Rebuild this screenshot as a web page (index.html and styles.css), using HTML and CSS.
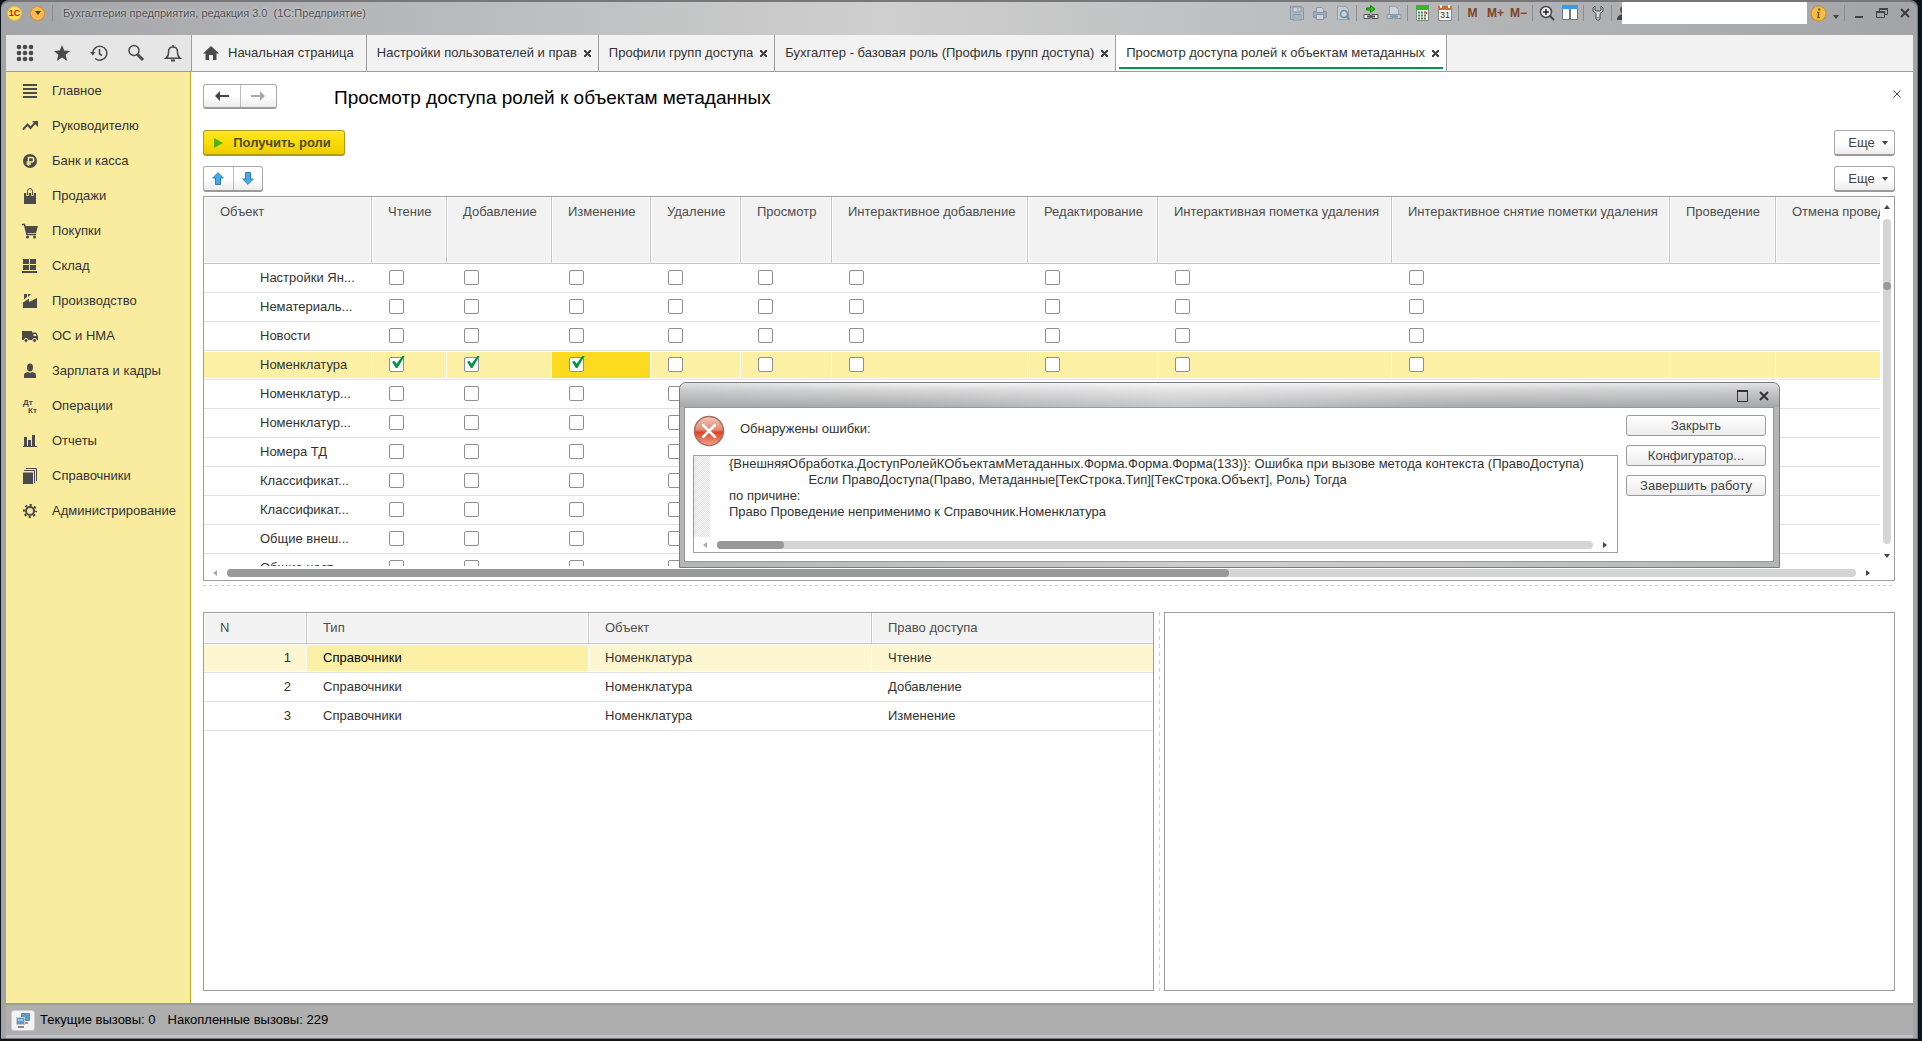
FILE: index.html
```html
<!DOCTYPE html>
<html lang="ru">
<head>
<meta charset="utf-8">
<title>Бухгалтерия предприятия, редакция 3.0</title>
<link rel="stylesheet" href="styles.css">
</head>
<body>
<div class="window">
  <header class="titlebar">
    <span class="logo"><b>1С</b></span>
    <button class="round-menu" aria-label="Главное меню"><i class="caret"></i></button>
    <i class="sep"></i>
    <span class="app-title">Бухгалтерия предприятия, редакция 3.0&nbsp; (1С:Предприятие)</span>
    <div class="tools">
      <button class="tool off" aria-label="Сохранить"><svg width="16" height="16" viewBox="0 0 16 16"><path d="M1.500 1.500h12l1 1v12h-13z" fill="#b3bcc4" stroke="#8296a6"/><path d="M4 2h8v5H4zM4 9.500h8V15H4z" fill="#ccd2d7" stroke="#8296a6"/><path d="M9 3v3M5 11h6M5 13h6" stroke="#8296a6"/></svg></button>
      <button class="tool off" aria-label="Печать"><svg width="16" height="16" viewBox="0 0 16 16"><path d="M1.500 6.500h13v6h-13z" fill="#9fadb8" stroke="#8296a6"/><path d="M4.500 2.500h5l2 2v3h-7zM4.500 9.500h7v5h-7z" fill="#ccd2d7" stroke="#8296a6"/></svg></button>
      <button class="tool off" aria-label="Просмотр"><svg width="16" height="16" viewBox="0 0 16 16"><path d="M2.500 1.500h8l3 3v10h-11z" fill="#c6cdd3" stroke="#8fa0ae"/><circle cx="9" cy="9" r="3.500" fill="#c6d3dc" stroke="#6f8ba1" stroke-width="1.500"/><path d="M11.500 11.500l3 3" stroke="#6f8ba1" stroke-width="2"/></svg></button>
      <i class="sep"></i>
      <button class="tool" aria-label="Получить ссылку"><svg width="16" height="16" viewBox="0 0 16 16"><path d="M3.500 3h4V.500l4.500 3.500-4.500 3.500V5h-4z" fill="#2bc81e" stroke="#14750d"/><path d="M1 9.500h6v4H1zM9 9.500h6v4H9z" fill="#eee" stroke="#555"/><path d="M4 11.500h8" stroke="#555" stroke-width="2"/></svg></button>
      <button class="tool off" aria-label="Перейти по ссылке"><svg width="16" height="16" viewBox="0 0 16 16"><path d="M3.500 1.500h6l3 3v5h-9z" fill="#ccd2d7" stroke="#8fa0ae"/><path d="M1 9.500h6v4H1zM9 9.500h6v4H9z" fill="#c3cad0" stroke="#8296a6"/><path d="M4 11.500h8" stroke="#8296a6" stroke-width="2"/></svg></button>
      <i class="sep"></i>
      <button class="tool" aria-label="Калькулятор"><svg width="16" height="16" viewBox="0 0 16 16"><path d="M2.500.500h12v15h-12z" fill="#f2f5f0" stroke="#7d8a7d"/><path d="M2 0h13v5H2z" fill="#39b339"/><path d="M4 7.500h8M4 10.500h8M4 13.500h8" stroke="#5f7d5f" stroke-width="2" stroke-dasharray="2 1"/><path d="M12 7h1v2h-1z" fill="#e33"/></svg></button>
      <button class="tool" aria-label="Календарь"><svg width="16" height="16" viewBox="0 0 16 16"><path d="M1.500 2.500h13v13h-13z" fill="#fafafa" stroke="#888"/><path d="M1 1h14v4H1z" fill="#c66f3c"/><path d="M4 0v3M12 0v3" stroke="#eee" stroke-width="2"/><text x="8" y="13" text-anchor="middle" class="cal-day">31</text></svg></button>
      <i class="sep"></i>
      <button class="tool mem">M</button>
      <button class="tool mem">M+</button>
      <button class="tool mem">M−</button>
      <i class="sep"></i>
      <button class="tool" aria-label="Масштаб"><svg width="16" height="16" viewBox="0 0 16 16"><circle cx="7" cy="7" r="5.500" fill="#eee" stroke="#444" stroke-width="1.500"/><path d="M7 4v6M4 7h6" stroke="#222" stroke-width="1.500"/><path d="M11 11l4 4" stroke="#444" stroke-width="2"/></svg></button>
      <button class="tool" aria-label="Панели"><svg width="16" height="16" viewBox="0 0 16 16"><path d="M.500 1.500h15v13H.500z" fill="#fff" stroke="#777"/><path d="M0 0h16v4H0z" fill="#3c9be8"/><path d="M8 4v11" stroke="#777" stroke-width="2"/></svg></button>
      <i class="sep"></i>
      <button class="tool" aria-label="Настройка"><svg width="16" height="16" viewBox="0 0 16 16"><path d="M5 1L3 3v3l3 2.500V14l2 1.500 2-1.500V8.500L13 6V3l-2-2v4L9.500 6h-3L5 5z" fill="#ddd" stroke="#444"/><path d="M8 12v1.500" stroke="#333"/></svg></button>
      <i class="sep"></i>
      <span class="user-clip"><svg width="16" height="16" viewBox="0 0 16 16"><circle cx="7" cy="5" r="4" fill="#555"/><path d="M0 15q0-6 7-6t7 6z" fill="#444"/></svg></span>
      <input class="title-input" type="text" aria-label="Пользователь">
      <button class="tool" aria-label="О программе"><svg width="17" height="17" viewBox="0 0 17 17"><circle cx="8.500" cy="8.500" r="7.500" fill="#f5bd45" stroke="#c98d20"/><circle cx="9.200" cy="4.500" r="1.200" fill="#7c5a1e"/><path d="M7 7.500h1.800L8 12.500h1.800" fill="none" stroke="#7c5a1e" stroke-width="1.500"/></svg></button>
      <button class="tool narrow" aria-label="Ещё"><i class="caret low"></i></button>
      <i class="sep"></i>
      <button class="tool" aria-label="Свернуть"><svg width="12" height="12" viewBox="0 0 12 12"><path d="M2 10h8" stroke="#444" stroke-width="2"/></svg></button>
      <button class="tool" aria-label="Восстановить"><svg width="12" height="12" viewBox="0 0 12 12"><path d="M3.500 4V1.500h8v6H9" fill="none" stroke="#444"/><path d="M3 2h9M0 5h9" stroke="#444" stroke-width="2"/><path d="M.500 4.500h8v6h-8z" fill="none" stroke="#444"/></svg></button>
      <button class="tool" aria-label="Закрыть"><svg width="12" height="12" viewBox="0 0 12 12"><path d="M2 2l8 8M10 2l-8 8" stroke="#3c3c3c" stroke-width="2"/></svg></button>
    </div>
  </header>

  <nav class="tabs">
    <div class="quick">
      <button aria-label="Меню функций"><svg width="18" height="18" viewBox="0 0 18 18" fill="#4a4a4a"><circle cx="3" cy="3" r="2.300"/><circle cx="9" cy="3" r="2.300"/><circle cx="15" cy="3" r="2.300"/><circle cx="3" cy="9" r="2.300"/><circle cx="9" cy="9" r="2.300"/><circle cx="15" cy="9" r="2.300"/><circle cx="3" cy="15" r="2.300"/><circle cx="9" cy="15" r="2.300"/><circle cx="15" cy="15" r="2.300"/></svg></button>
      <button aria-label="Избранное"><svg width="18" height="18" viewBox="0 0 18 18" fill="#4a4a4a"><path d="M9 1l2.200 5.500 6 .400-4.600 3.800L14.200 17 9 13.500 3.800 17l1.600-6.300L.800 6.900l6-.400z"/></svg></button>
      <button aria-label="История"><svg width="18" height="18" viewBox="0 0 18 18" fill="none" stroke="#4a4a4a" stroke-width="1.500"><path d="M2.800 9.500a7 7 0 1 1 2.400 5"/><path d="M9.500 5v5l2.500 1.500"/><path d="M0 8h5.500L2.800 11.500z" fill="#4a4a4a" stroke="none"/></svg></button>
      <button aria-label="Поиск"><svg width="18" height="18" viewBox="0 0 18 18" fill="none" stroke="#4a4a4a"><circle cx="7" cy="6.500" r="5" stroke-width="1.500"/><path d="M10.500 10.500l5.500 5.500" stroke-width="3"/></svg></button>
      <button aria-label="Уведомления"><svg width="18" height="18" viewBox="0 0 18 18" fill="none" stroke="#4a4a4a" stroke-width="1.500"><path d="M9 1v2M2 14.200h14c-2-1.500-2.500-3-2.500-6 0-3-1.700-5.200-4.500-5.200S4.500 5.200 4.500 8.200c0 3-.500 4.500-2.500 6z"/><path d="M7 16.500h4" stroke-width="2"/></svg></button>
    </div>
    <a class="tab home" href="#"><svg width="16" height="14" viewBox="0 0 16 14" fill="#4a4a4a"><path d="M8 0l8 7.500h-2.500V14H10V9H6v5H2.500V7.500H0z"/></svg>Начальная страница</a>
    <a class="tab" href="#">Настройки пользователей и прав<i class="x"></i></a>
    <a class="tab" href="#">Профили групп доступа<i class="x"></i></a>
    <a class="tab" href="#">Бухгалтер - базовая роль (Профиль групп доступа)<i class="x"></i></a>
    <a class="tab active" href="#">Просмотр доступа ролей к объектам метаданных<i class="x"></i></a>
  </nav>

  <div class="body">
    <nav class="side">
      <a href="#"><svg width="16" height="16" viewBox="0 0 16 16"><path d="M1 2h14M1 6h14M1 10h14M1 14h14" stroke="#4a4a4a" stroke-width="2"/></svg>Главное</a>
      <a href="#"><svg width="16" height="16" viewBox="0 0 16 16"><path d="M1 11.500l4.500-5 3 3.500L13 5" fill="none" stroke="#4a4a4a" stroke-width="2"/><path d="M10 3h6v6z" fill="#4a4a4a"/></svg>Руководителю</a>
      <a href="#"><svg width="16" height="16" viewBox="0 0 16 16"><circle cx="8" cy="8" r="7" fill="#4a4a4a"/><path d="M6.500 13V4.500h3a2 2 0 0 1 0 4.500H4.500M4.500 11h4.500" fill="none" stroke="#faec9f" stroke-width="1.500"/></svg>Банк и касса</a>
      <a href="#"><svg width="16" height="16" viewBox="0 0 16 16"><path d="M2 5h12v11H2z" fill="#4a4a4a"/><path d="M5.500 8V3.500q0-2.500 2.500-2.500t2.500 2.500V8" fill="none" stroke="#faec9f" stroke-width="2.500"/><path d="M5.500 7V3.500q0-3 2.500-3t2.500 3V7" fill="none" stroke="#4a4a4a"/></svg>Продажи</a>
      <a href="#"><svg width="16" height="16" viewBox="0 0 16 16"><path d="M3 3h13l-2 7H4.500z" fill="#4a4a4a"/><path d="M0 1.500h2.500l2.500 10h9" fill="none" stroke="#4a4a4a" stroke-width="1.500"/><circle cx="5.500" cy="14" r="1.500" fill="#4a4a4a"/><circle cx="12.500" cy="14" r="1.500" fill="#4a4a4a"/></svg>Покупки</a>
      <a href="#"><svg width="16" height="16" viewBox="0 0 16 16"><path d="M1 1h6v5H1zM8 1h6v5H8zM1 7h6v5H1zM8 7h6v5H8zM0 13h15v2H0z" fill="#4a4a4a"/></svg>Склад</a>
      <a href="#"><svg width="16" height="16" viewBox="0 0 16 16"><path d="M1 9.500l6-4v3.500L15 5v10H1zM2 1h3v3L2 6.500zM6 1h3l-3 3z" fill="#4a4a4a"/></svg>Производство</a>
      <a href="#"><svg width="16" height="16" viewBox="0 0 16 16"><path d="M0 3h10v9H0zM10 4.500h4l2 3.500v4h-6z" fill="#4a4a4a"/><path d="M11.500 6h2l1 2h-3z" fill="#faec9f"/><g fill="#4a4a4a" stroke="#faec9f"><circle cx="4" cy="12.500" r="2"/><circle cx="12.500" cy="12.500" r="2"/></g></svg>ОС и НМА</a>
      <a href="#"><svg width="16" height="16" viewBox="0 0 16 16" fill="#4a4a4a"><ellipse cx="8" cy="4.500" rx="3" ry="4"/><path d="M2 15v-3q0-2.500 4-3l2 1 2-1q4 .500 4 3v3z"/></svg>Зарплата и кадры</a>
      <a href="#"><svg width="16" height="16" viewBox="0 0 16 16" class="dk"><text x="1" y="7">Дт</text><text x="6" y="15">Кт</text></svg>Операции</a>
      <a href="#"><svg width="16" height="16" viewBox="0 0 16 16"><path d="M1 13h14v1H1zM2 4h3v9H2zM6 7h3v6H6zM10 2h3v11h-3z" fill="#4a4a4a"/></svg>Отчеты</a>
      <a href="#"><svg width="16" height="16" viewBox="0 0 16 16"><path d="M1 4.500h10V16H1z" fill="#4a4a4a"/><path d="M2 2.500h10.500V15M4 .500h10.500V13" fill="none" stroke="#4a4a4a"/></svg>Справочники</a>
      <a href="#"><svg width="16" height="16" viewBox="0 0 16 16"><circle cx="8" cy="8" r="4" fill="none" stroke="#4a4a4a" stroke-width="2"/><circle cx="8" cy="8" r="6" fill="none" stroke="#4a4a4a" stroke-width="2" stroke-dasharray="2.300 2.412" stroke-dashoffset="1.150"/></svg>Администрирование</a>
    </nav>

    <main>
      <div class="form-head">
        <div class="pair nav-pair">
          <button aria-label="Назад"><svg width="14" height="12" viewBox="0 0 14 12"><path d="M1 6h13" stroke="#444" stroke-width="2"/><path d="M0 6l5-5v10z" fill="#444"/></svg></button>
          <button aria-label="Вперед"><svg width="14" height="12" viewBox="0 0 14 12"><path d="M0 6h13" stroke="#aaa" stroke-width="2"/><path d="M14 6L9 1v10z" fill="#aaa"/></svg></button>
        </div>
        <h1>Просмотр доступа ролей к объектам метаданных</h1>
        <button class="close" aria-label="Закрыть форму"><svg width="8" height="8" viewBox="0 0 8 8"><path d="M.500.500l7 7M7.500.500l-7 7" stroke="#444"/></svg></button>
      </div>
      <div class="bar cmd">
        <button class="btn primary"><i class="play"></i>Получить роли</button>
        <button class="btn more">Еще<i class="caret"></i></button>
      </div>
      <div class="bar">
        <div class="pair move-pair">
          <button aria-label="Вверх"><svg width="12" height="13" viewBox="0 0 12 13"><path d="M6 .700L11.300 6H8.500v6.500h-5V6H.700z" fill="#45abe8" stroke="#2b7cb0"/></svg></button>
          <button aria-label="Вниз"><svg width="12" height="13" viewBox="0 0 12 13"><path d="M6 12.300L11.300 7H8.500V.500h-5V7H.700z" fill="#45abe8" stroke="#2b7cb0"/></svg></button>
        </div>
        <button class="btn more">Еще<i class="caret"></i></button>
      </div>

      <section class="panel objects">
        <div class="view">
          <table class="grid rights">
            <colgroup><col class="w168"><col class="w75"><col class="w105"><col class="w99"><col class="w90"><col class="w91"><col class="w196"><col class="w130"><col class="w234"><col class="w278"><col class="w106"><col class="w160"></colgroup>
            <thead><tr><th>Объект</th><th>Чтение</th><th>Добавление</th><th>Изменение</th><th>Удаление</th><th>Просмотр</th><th>Интерактивное добавление</th><th>Редактирование</th><th>Интерактивная пометка удаления</th><th>Интерактивное снятие пометки удаления</th><th>Проведение</th><th>Отмена проведения</th></tr></thead>
            <tbody id="rows"></tbody>
          </table>
        </div>
        <div class="vbar"><i class="arr up"></i><div class="track"><i class="dot"></i></div><i class="arr down"></i></div>
        <div class="hbar"><i class="arr left"></i><div class="track"><i class="thumb half"></i></div><i class="arr right"></i></div>
      </section>
      <div class="split"></div>
      <div class="lower">
        <section class="panel">
          <table class="grid picked">
            <colgroup><col class="p1"><col class="p2"><col class="p3"><col class="p3"></colgroup>
            <thead><tr><th>N</th><th>Тип</th><th>Объект</th><th>Право доступа</th></tr></thead>
            <tbody>
              <tr class="soft"><td class="num">1</td><td class="cur">Справочники</td><td>Номенклатура</td><td>Чтение</td></tr>
              <tr><td class="num">2</td><td>Справочники</td><td>Номенклатура</td><td>Добавление</td></tr>
              <tr><td class="num">3</td><td>Справочники</td><td>Номенклатура</td><td>Изменение</td></tr>
            </tbody>
          </table>
        </section>
        <div class="vsplit"></div>
        <section class="panel"></section>
      </div>
    </main>
  </div>

  <footer class="status">
    <button aria-label="Показатели производительности"><svg width="16" height="16" viewBox="0 0 16 16"><path d="M6.500 1.500h8v7h-8z" fill="#5d9dc9" stroke="#7d868c"/><path d="M9 10h4v2H9z" fill="#999"/><path d="M1.500 5.500h8v7h-8z" fill="#5d9dc9" stroke="#c4c9cc"/><path d="M3 7h5v2H3z" fill="#9cc8e6"/><path d="M3 14h6v2H3z" fill="#888"/></svg></button>
    <span>Текущие вызовы: 0</span><span>Накопленные вызовы: 229</span>
  </footer>
</div>

<div class="dialog" role="dialog" aria-label="Обнаружены ошибки">
  <div class="dialog-title">
    <button aria-label="Развернуть"><svg width="12" height="12" viewBox="0 0 12 12"><path d="M.500 1h10v10.500H.500z" fill="none" stroke="#333"/><path d="M0 1h11" stroke="#333" stroke-width="2"/></svg></button>
    <button aria-label="Закрыть"><svg width="12" height="12" viewBox="0 0 12 12"><path d="M2 2l8 8M10 2l-8 8" stroke="#333" stroke-width="2"/></svg></button>
  </div>
  <div class="dialog-body">
    <div class="message">
      <div class="caption">
        <svg width="32" height="32" viewBox="0 0 32 32"><defs><linearGradient id="red" x1="0" y1="0" x2="0" y2="1"><stop offset="0" stop-color="#f3c9bd"/><stop offset=".45" stop-color="#e58a76"/><stop offset=".55" stop-color="#dc4426"/><stop offset="1" stop-color="#f0a58c"/></linearGradient></defs><circle cx="16" cy="16" r="14.500" fill="url(#red)" stroke="#a8705f" stroke-width="1.500"/><path d="M10 10l12 12M22 10L10 22" stroke="#fff" stroke-width="2.500" stroke-linecap="round"/></svg>
        <label for="err">Обнаружены ошибки:</label>
      </div>
      <div class="errbox">
        <div class="errview"><i class="gutter"></i><textarea id="err" readonly wrap="off">{ВнешняяОбработка.ДоступРолейКОбъектамМетаданных.Форма.Форма.Форма(133)}: Ошибка при вызове метода контекста (ПравоДоступа)
		Если ПравоДоступа(Право, Метаданные[ТекСтрока.Тип][ТекСтрока.Объект], Роль) Тогда
по причине:
Право Проведение неприменимо к Справочник.Номенклатура</textarea></div>
        <div class="hbar"><i class="arr left"></i><div class="track"><i class="thumb small"></i></div><i class="arr right"></i></div>
      </div>
    </div>
    <div class="actions">
      <button>Закрыть</button>
      <button>Конфигуратор...</button>
      <button>Завершить работу</button>
    </div>
  </div>
</div>
<script src="app.js"></script>
</body>
</html>
```
FILE: app.js
```js
const names = ['Настройки Ян...', 'Нематериаль...', 'Новости', 'Номенклатура', 'Номенклатур...', 'Номенклатур...', 'Номера ТД', 'Классификат...', 'Классификат...', 'Общие внеш...', 'Общие наст...'];
const selected = 3;
const columns = 12, boxes = 9;
const body = document.getElementById('rows');
names.forEach((name, r) => {
  const tr = body.insertRow();
  if (r === selected) tr.className = 'sel';
  for (let c = 0; c < columns; c++) {
    const td = tr.insertCell();
    if (c === 0) { td.textContent = name; td.className = 'name'; continue; }
    if (c > boxes) continue;
    const box = document.createElement('input');
    box.type = 'checkbox';
    box.checked = r === selected && c <= 3;
    box.setAttribute('aria-label', name + ' ' + c);
    td.append(box);
    if (r === selected && c === 3) td.className = 'cur';
  }
});
```
FILE: styles.css
```css
* { box-sizing: border-box; }
body {
  margin: 0; height: 100vh; padding: 0 4px 2px 1px; background: #0c141a;
  font: 13px/16px "Liberation Sans", Arial, sans-serif; color: #333; overflow: hidden; position: relative;
}
button { font: inherit; color: inherit; padding: 0; border: 0; background: none; display: flex; align-items: center; justify-content: center; }
a { color: inherit; text-decoration: none; }
svg { display: block; flex: none; }
i { font-style: normal; flex: none; }

.window {
  height: 100%; display: flex; flex-direction: column; padding: 0 4px 0 5px;
  border: 1px solid #77777a; border-width: 2px 1px 1px 0; border-radius: 8px 8px 0 0;
  background: linear-gradient(90deg, #a3a4a7 0, #b4b5b7 18%, #cfcfcf 46%, #b5b6b8 75%, #a3a4a7 100%);
}

/* title bar */
.titlebar { flex: none; height: 33px; padding-bottom: 11px; display: flex; align-items: center; }
.logo { width: 15px; height: 15px; margin: 0 8px 0 1px; border-radius: 50%; background: #fbe05a; border: 1px solid #e8b83a; display: flex; align-items: center; justify-content: center; }
.logo b { font-size: 9px; line-height: 9px; color: #e01414; }
.round-menu { width: 15px; height: 15px; border-radius: 50%; background: #fbb850; border: 1px solid #c98d3a; }
.sep { width: 1px; height: 16px; margin: 0 2px; background: #8c8d90; }
.round-menu + .sep { margin: 0 10px 0 7px; }
.app-title { font-size: 11px; color: #505050; text-shadow: 0 0 3px #e8e8e8; }
.tools { margin: 0 -3px 0 auto; display: flex; align-items: center; }
.tool { width: 23px; height: 20px; }
.tool.narrow { width: 12px; }
.mem { font-weight: bold; font-size: 12px; color: #7d4422; }
.cal-day { font-size: 9px; fill: #333; }
.user-clip { width: 8px; overflow: hidden; }
.user-clip svg { margin-left: 3px; }
.title-input { width: 185px; height: 22px; border: 0; padding: 0 4px; background: #fff; }
.caret { width: 0; height: 0; border: 3px solid transparent; border-top: 4px solid #444; border-bottom: 0; }
.caret.low { margin-top: 8px; }

/* tabs */
.tabs { flex: none; height: 37px; display: flex; background: #f2f2f2; border-bottom: 1px solid #9d9d9d; }
.quick { width: 185px; display: flex; background: #e6e6e6; }
.quick button { width: 37px; }
.tab { display: flex; align-items: center; padding: 0 7px 0 10px; border-left: 1px solid #9d9d9d; white-space: nowrap; }
.home { padding: 0 12px 0 11px; gap: 9px; }
.x { width: 7px; height: 7px; margin-left: 7px; background: linear-gradient(45deg, transparent 42%, #444 42%, #444 58%, transparent 58%), linear-gradient(-45deg, transparent 42%, #444 42%, #444 58%, transparent 58%); }
.active { background: linear-gradient(#009646, #009646) center bottom 2px / calc(100% - 6px) 2px no-repeat #fff; border-right: 1px solid #9d9d9d; }

/* work area */
.body { flex: 1; min-height: 0; display: flex; background: #fff; }
.side { flex: none; width: 185px; padding-top: 1px; background: #faec9f; border-right: 1px solid #b9a520; }
.side a { height: 35px; display: flex; align-items: center; gap: 14px; padding-left: 16px; white-space: nowrap; }
.dk { font-size: 8px; font-weight: bold; fill: #4a4a4a; overflow: visible; }
main { flex: 1; min-width: 0; display: flex; flex-direction: column; padding: 12px 18px 12px 12px; }
.form-head { display: flex; align-items: center; height: 25px; margin-bottom: 21px; }
h1 { margin: 0 auto 0 57px; padding-top: 2px; font-weight: normal; font-size: 19px; line-height: 24px; color: #000; }
.close { width: 20px; height: 20px; margin-right: -12px; align-self: flex-start; }
.bar { display: flex; justify-content: space-between; height: 26px; margin-bottom: 4px; }
.bar.cmd { margin-bottom: 10px; }
.btn, .pair { border: 1px solid #a9a9a9; border-bottom: 2px solid #9a9a9a; border-radius: 3px; background: linear-gradient(#fff 50%, #ececec); color: #444; }
.more { width: 61px; gap: 7px; padding-left: 7px; }
.primary { width: 142px; gap: 10px; padding-right: 3px; font-weight: bold; background: linear-gradient(#ffe628, #fbdc00 50%, #eccb00); border-color: #b19c19; color: #4d4d28; }
.play { width: 0; height: 0; border: 5px solid transparent; border-left: 9px solid #4bb415; border-right: 0; }
.pair { display: flex; }
.pair button { flex: 1; }
.pair button + button { border-left: 1px solid #bbb; }
.nav-pair { width: 74px; height: 25px; }
.move-pair { width: 60px; }

.panel { border: 1px solid #9d9d9d; background: #fff; min-width: 0; overflow: hidden; }
.objects { flex: 384 1 0; min-height: 0; display: grid; grid-template: minmax(0, 1fr) 14px / minmax(0, 1fr) 14px; }
.view { overflow: hidden; }
.grid { table-layout: fixed; border-collapse: separate; border-spacing: 0; }
.rights { width: 1732px; }
.w168 { width: 168px; } .w75 { width: 75px; } .w105 { width: 105px; } .w99 { width: 99px; } .w90 { width: 90px; } .w91 { width: 91px; }
.w196 { width: 196px; } .w130 { width: 130px; } .w234 { width: 234px; } .w278 { width: 278px; } .w106 { width: 106px; } .w160 { width: 160px; }
.grid th {
  padding: 7px 0 6px 16px; text-align: left; vertical-align: top; font-weight: normal; color: #4d4d4d; white-space: nowrap;
  background: #f2f2f2; border-right: 1px solid #c6c6c6; border-bottom: 1px solid #c6c6c6; box-shadow: inset 0 0 0 1px #fff;
}
.rights th { height: 67px; }
.grid td { height: 29px; padding: 0 0 0 16px; border-bottom: 1px solid #e2e2e2; white-space: nowrap; }
.rights .name { padding-left: 56px; }
.sel td { background: #fcf0a4; box-shadow: inset 0 1px #fff, inset -1px -1px #fff; }
.soft td { background: #fdf6d0; box-shadow: inset 0 1px #fff, inset -1px -1px #fff; }
.sel .cur { background: #fbda20; }
.soft .cur { background: #fcf0a4; color: #000; }
.grid .num { padding: 0 16px 0 0; text-align: right; }
input[type="checkbox"] { appearance: none; display: block; width: 15px; height: 15px; margin: 0 0 2px 1px; border: 1px solid #8f8f8f; border-radius: 2px; background: #fff; position: relative; }
input[type="checkbox"]:checked::after { content: ""; position: absolute; left: 2px; top: -2px; width: 13px; height: 13px; background: #009646; clip-path: polygon(0 48%, 20% 42%, 36% 64%, 82% 0, 100% 0, 42% 96%, 30% 96%); }

/* scroll bars */
.vbar { grid-row: 1 / 3; display: flex; flex-direction: column; align-items: center; padding: 8px 0 22px; gap: 10px; }
.vbar .track { width: 8px; flex: 1; padding-top: 63px; }
.hbar { display: flex; align-items: center; height: 14px; padding: 0 10px 0 9px; gap: 10px; }
.objects > .hbar { grid-row: 2; grid-column: 1; }
.track { border-radius: 4px; background: #d5d5d5; }
.hbar .track { flex: 1; height: 8px; }
.dot { display: block; width: 8px; height: 8px; border-radius: 50%; background: #999; }
.thumb { display: block; height: 8px; border-radius: 4px; background: #999; }
.half { width: 61.5%; }
.small { width: 67px; }
.arr { width: 0; height: 0; border: 3px solid transparent; }
.up { border-bottom: 4px solid #444; border-top: 0; }
.down { border-top: 4px solid #444; border-bottom: 0; }
.left { border-right: 4px solid #aaa; border-left: 0; }
.right { border-left: 4px solid #444; border-right: 0; }

.split { height: 31px; background: repeating-linear-gradient(90deg, #cfcfcf 0 3px, transparent 3px 6px) 0 4px / 100% 1px no-repeat; }
.lower { flex: 380 1 0; min-height: 0; display: grid; grid-template-columns: 951fr 10px 731fr; }
.vsplit { background: repeating-linear-gradient(#cfcfcf 0 4px, transparent 4px 8px) 5px 0 / 1px 100% no-repeat; }
.picked { width: 100%; }
.p1 { width: 103px; } .p2 { width: 282px; } .p3 { width: 283px; }
.picked th { height: 31px; }
.picked th:last-child { border-right: 0; }

/* status bar */
.status { flex: none; height: 35px; padding: 0 7px 0 5px; display: flex; align-items: center; gap: 12px; background: #aeaeae; border-top: 2px solid #9b9f9b; border-bottom: 3px solid #c2c3c4; color: #000; }
.status button { width: 24px; height: 21px; margin-right: -7px; border: 1px solid #ccc; border-radius: 3px; background: #f4f4f4; }

/* error dialog floating over the form */
.dialog {
  position: absolute; left: 679px; top: 382px; width: 1101px; height: 186px; display: flex; flex-direction: column;
  padding: 0 5px 5px 4px; border: 1px solid #7b7b7b; border-radius: 7px 7px 0 0; background: linear-gradient(90deg, #b4b5b7, #cfcfcf 50%, #b4b5b7);
}
.dialog-title { height: 24px; margin: 0 -5px 0 -4px; padding: 2px 9px 0 0; border-radius: 6px 6px 0 0; display: flex; align-items: center; justify-content: flex-end; gap: 9px; background: linear-gradient(90deg, #9b9ca033, transparent 20%, #ffffff55 45%, transparent 70%, #9b9ca033), linear-gradient(#f2f2f2, #d6d6d7 30%, #a9aaad); }
.dialog-body { flex: 1; display: flex; gap: 8px; padding: 7px 7px 8px 8px; background: #fff; border: 1px solid #999; }
.message { flex: 1; min-width: 0; display: flex; flex-direction: column; }
.caption { display: flex; gap: 15px; height: 40px; }
.caption label { padding-top: 6px; }
.errbox { flex: 1; display: flex; flex-direction: column; border: 1px solid #9d9d9d; }
.errview { flex: 1; display: flex; min-height: 0; }
.gutter { width: 16px; background: repeating-conic-gradient(#e2e2e2 0 25%, #fafafa 0 50%) 0 0 / 2px 2px; }
textarea { flex: 1; min-width: 0; margin: 0; padding: 0 0 0 19px; border: 0; resize: none; outline: 0; overflow: hidden; font: inherit; color: #333; background: #fff; tab-size: 11; white-space: pre; }
.errbox .hbar { height: 15px; }
.actions { width: 140px; display: flex; flex-direction: column; gap: 9px; }
.actions button { height: 21px; border: 1px solid #999; border-radius: 3px; background: linear-gradient(#fff, #ececec); color: #444; }
```
